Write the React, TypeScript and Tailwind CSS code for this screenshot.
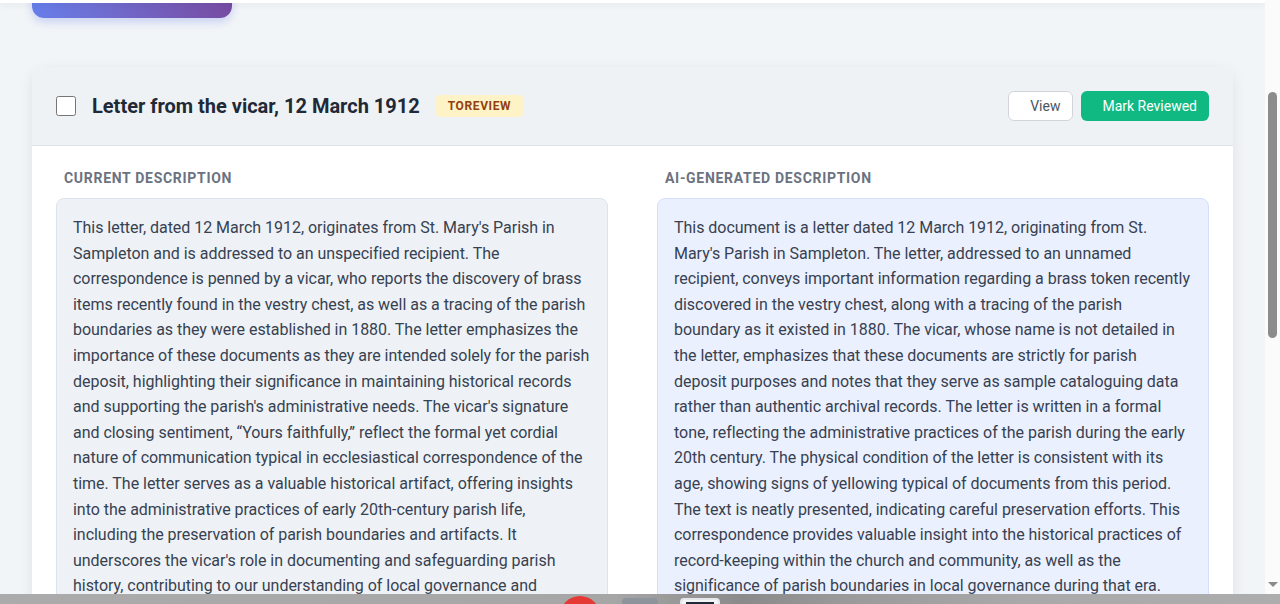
import { useLayoutEffect, useRef } from 'react'

interface ReviewItem {
  id: string
  title: string
  status: string
  current: string
  generated: string
}

const ITEMS: ReviewItem[] = [
  {
    id: 'vicar-1912',
    title: 'Letter from the vicar, 12 March 1912',
    status: 'toreview',
    current:
      "This letter, dated 12 March 1912, originates from St. Mary's Parish in Sampleton and is addressed to an unspecified recipient. The correspondence is penned by a vicar, who reports the discovery of brass items recently found in the vestry chest, as well as a tracing of the parish boundaries as they were established in 1880. The letter emphasizes the importance of these documents as they are intended solely for the parish deposit, highlighting their significance in maintaining historical records and supporting the parish's administrative needs. The vicar's signature and closing sentiment, \u201cYours faithfully,\u201d reflect the formal yet cordial nature of communication typical in ecclesiastical correspondence of the time. The letter serves as a valuable historical artifact, offering insights into the administrative practices of early 20th-century parish life, including the preservation of parish boundaries and artifacts. It underscores the vicar's role in documenting and safeguarding parish history, contributing to our understanding of local governance and community heritage.",
    generated:
      "This document is a letter dated 12 March 1912, originating from St. Mary's Parish in Sampleton. The letter, addressed to an unnamed recipient, conveys important information regarding a brass token recently discovered in the vestry chest, along with a tracing of the parish boundary as it existed in 1880. The vicar, whose name is not detailed in the letter, emphasizes that these documents are strictly for parish deposit purposes and notes that they serve as sample cataloguing data rather than authentic archival records. The letter is written in a formal tone, reflecting the administrative practices of the parish during the early 20th century. The physical condition of the letter is consistent with its age, showing signs of yellowing typical of documents from this period. The text is neatly presented, indicating careful preservation efforts. This correspondence provides valuable insight into the historical practices of record-keeping within the church and community, as well as the significance of parish boundaries in local governance during that era.",
  },
  {
    id: 'boundary-1880',
    title: 'Tracing of the parish boundary, 1880',
    status: 'toreview',
    current:
      "A hand-drawn tracing on thin paper showing the boundary of St. Mary's Parish, Sampleton, as surveyed in 1880. Field names, footpaths and boundary stones are marked in ink, with later pencil annotations along the northern edge.",
    generated:
      "This item is a tracing of the parish boundary of St. Mary's Parish in Sampleton, dated 1880. It records the course of the boundary across fields and lanes, noting boundary stones and landmarks, and includes later annotations in pencil.",
  },
]

function ReviewCard({ item, cardRef }: { item: ReviewItem; cardRef?: React.Ref<HTMLDivElement> }) {
  return (
    <div ref={cardRef} className="overflow-hidden rounded-xl bg-white shadow-[0_4px_14px_rgba(15,23,42,0.08)]">
      <div className="flex h-[79px] items-center border-b border-[#dde3ea] bg-[#eef2f5] px-6">
        <input type="checkbox" className="h-5 w-5 shrink-0" />
        <h3 className="ml-4 text-[20px] font-bold text-[#1f2937]">{item.title}</h3>
        <span className="ml-4 rounded bg-[#fef3c7] px-3 py-[3px] text-xs font-bold uppercase tracking-[0.05em] text-[#92400e]">
          {item.status}
        </span>
        <div className="ml-auto flex items-center gap-2">
          <button
            type="button"
            className="h-[30px] rounded-md border border-[#d1d5db] bg-white pl-[21px] pr-3 text-sm text-[#4b5563]"
          >
            View
          </button>
          <button
            type="button"
            className="h-[30px] rounded-md bg-[#10b981] pl-[21px] pr-3 text-sm text-white"
          >
            Mark Reviewed
          </button>
        </div>
      </div>

      <div className="grid grid-cols-2 gap-[49px] px-6 pb-6 pt-[22px]">
        <div>
          <p className="mb-2.5 px-2 text-sm font-bold uppercase leading-5 tracking-[0.05em] text-[#6b7280]">
            Current Description
          </p>
          <div className="rounded-lg border border-[#dbe3ec] bg-[#eef2f6] p-4 text-base leading-[1.6] tracking-[-0.03px] text-[#374151]">
            {item.current}
          </div>
        </div>
        <div>
          <p className="mb-2.5 px-2 text-sm font-bold uppercase leading-5 tracking-[0.05em] text-[#6b7280]">
            AI-Generated Description
          </p>
          <div className="rounded-lg border border-[#d6defb] bg-[#ebf0fe] p-4 text-base leading-[1.6] tracking-[-0.03px] text-[#374151]">
            {item.generated}
          </div>
        </div>
      </div>
    </div>
  )
}

export default function App() {
  const scrollRef = useRef<HTMLDivElement>(null)
  const firstCardRef = useRef<HTMLDivElement>(null)

  useLayoutEffect(() => {
    // Land the first card 67px below the top, as if the user scrolled down.
    const scroller = scrollRef.current
    const card = firstCardRef.current
    if (scroller && card) scroller.scrollTop = card.offsetTop - 67
  }, [])

  return (
    <div className="flex h-screen flex-col font-['Roboto','Liberation_Sans',sans-serif]">
      <div className="flex min-h-0 flex-1">
        <div ref={scrollRef} className="relative min-w-0 flex-1 overflow-y-scroll bg-[#f2f5f7]">
          <div className="sticky top-0 z-10 h-[3px] bg-white shadow-[0_2px_6px_rgba(0,0,0,0.07)]" />

          <header className="px-8 pb-6 pt-10">
            <h1 className="text-3xl font-bold text-[#1f2937]">Description Review</h1>
            <p className="mt-2 text-base text-[#6b7280]">Compare catalogue descriptions with AI-generated drafts.</p>
            <p className="mt-1 text-sm text-[#9ca3af]">2 items awaiting review</p>
          </header>

          <div className="px-8">
            <button
              type="button"
              className="h-[60px] w-[200px] rounded-xl bg-linear-to-r from-[#667eea] to-[#764ba2] pb-5 text-sm font-semibold text-white shadow-[0_4px_10px_rgba(102,126,234,0.3)]"
            >
              Generate Descriptions
            </button>
          </div>

          <div className="flex flex-col gap-6 px-8 pb-10 pt-[49px]">
            {ITEMS.map((item, i) => (
              <ReviewCard key={item.id} item={item} cardRef={i === 0 ? firstCardRef : undefined} />
            ))}
          </div>
        </div>

        {/* scrollbar as the browser drew it */}
        <div className="flex w-[15px] shrink-0 flex-col items-center bg-[#fbfbfb]">
          <div className="mt-[92px] h-[246px] w-[9px] rounded-full bg-[#8c8c8c]" />
          <div className="mb-[7px] mt-auto h-0 w-0 border-x-[5px] border-t-[5px] border-x-transparent border-t-[#8a8a8a]" />
        </div>
      </div>

      <div className="flex h-[10px] shrink-0 items-start overflow-hidden bg-[linear-gradient(90deg,#ababab_0%,#a6a6a6_48%,#8a8a8a_58%,#9a9a9a_66%,#a9a9a9_80%,#adadad_100%)] pl-[560px]">
        <div className="mt-[2px] h-10 w-10 shrink-0 rounded-full bg-[#e53935]" />
        <div className="ml-[22px] mt-1 h-9 w-[36px] shrink-0 rounded bg-[#8d949c]" />
        <div className="ml-[22px] mt-1 h-9 w-10 shrink-0 rounded border-2 border-[#e5e7eb] bg-[#f3f4f6]">
          <div className="mx-auto mt-[2px] h-[3px] w-7 bg-[#1f2937]" />
        </div>
      </div>
    </div>
  )
}
